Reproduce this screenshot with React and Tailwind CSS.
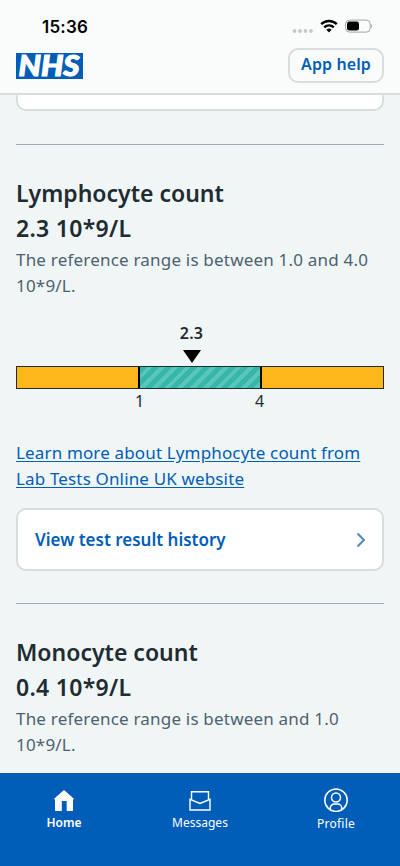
import React from 'react';

const results = [
  {
    name: 'Lymphocyte count',
    value: '2.3 10*9/L',
    range: ['The reference range is between 1.0 and 4.0', '10*9/L.'],
    chart: { value: '2.3', low: '1', high: '4' },
    link: ['Learn more about Lymphocyte count from', 'Lab Tests Online UK website'],
  },
  {
    name: 'Monocyte count',
    value: '0.4 10*9/L',
    range: ['The reference range is between and 1.0', '10*9/L.'],
  },
];

const StatusBar = () => (
  <div className="flex h-[45px] items-start justify-between pl-[42px] pr-[27px]">
    <span className="mt-[16px] font-['Inter',sans-serif] text-[17px] leading-[22px] font-semibold tracking-[0.2px] text-black">15:36</span>
    <div className="mt-[19px] flex items-center">
      <svg width="22" height="14" viewBox="0 0 22 14" fill="#c6c8c9" className="mr-[6px]">
        <circle cx="2.5" cy="12" r="1.9" />
        <circle cx="8" cy="12" r="1.9" />
        <circle cx="13.5" cy="12" r="1.9" />
        <circle cx="19" cy="12" r="1.9" />
      </svg>
      <svg width="18" height="14" viewBox="0 0 18 14" className="mr-[7px]">
        <g fill="none" stroke="#000" strokeWidth="2.4">
          <path d="M1.2 5.2a11 11 0 0 1 15.6 0" />
          <path d="M4.2 8.4a6.8 6.8 0 0 1 9.6 0" />
        </g>
        <path d="M9 13.4 6.4 10.8a3.7 3.7 0 0 1 5.2 0z" />
      </svg>
      <svg width="28" height="14" viewBox="0 0 28 14">
        <rect x=".6" y="1.1" width="24.6" height="12" rx="3.8" fill="none" stroke="#a3a5a5" />
        <rect x="2" y="2.6" width="12" height="9" rx="2.4" />
        <path d="M26.2 5v4.2c1.3-.6 1.3-3.6 0-4.2z" fill="#a3a5a5" />
      </svg>
    </div>
  </div>
);

const Header = () => (
  <header className="h-[95px] shrink-0 border-b-2 border-[#d8dddd] bg-[#fafcfb]">
    <StatusBar />
    <div className="flex items-start justify-between px-4">
      <svg width="67" height="26" viewBox="0 0 67 26" className="mt-[8px] overflow-visible">
        <rect width="67" height="26" fill="#005eb8" />
        <text x="2.5" y="23" textLength="61" lengthAdjust="spacingAndGlyphs" fill="#fff" stroke="#fff" strokeWidth="1.1" fontFamily="Lato, sans-serif" fontSize="27.5" fontStyle="italic" fontWeight="900">NHS</text>
      </svg>
      <button className="mt-[3px] h-[35px] w-[96px] rounded-[10px] border-2 border-[#d8dddd] pb-[3px] text-[16px] leading-[26px] font-semibold tracking-[0.1px] text-[#005eb8]">
        App help
      </button>
    </div>
  </header>
);

const RangeChart = ({ value, low, high }) => (
  <div className="mt-[22px] text-[#212b32]">
    <p className="w-[351px] text-center text-[16px] leading-[24px] font-semibold tracking-[0.3px]">{value}</p>
    <svg width="18" height="13" viewBox="0 0 18 13" className="ml-[167px] mt-[5px] block">
      <path d="M0 0h18L9 13z" />
    </svg>
    <div className="mt-[3px] flex h-[23px] border border-[#212b32] bg-[#ffb81c]">
      <div className="w-[121px]" />
      <div className="w-[124px] border-x-2 border-black bg-[repeating-linear-gradient(135deg,#35b7aa_0px,#35b7aa_5px,#5bc5bb_5px,#5bc5bb_9px)]" />
    </div>
    <div className="flex pl-[119px] text-[16px] leading-[24px]">
      <span className="w-[120px]">{low}</span>
      <span>{high}</span>
    </div>
  </div>
);

const TestResult = ({ name, value, range, chart, link }) => (
  <section className="border-t-[1.5px] border-[#a0a9b5] pt-[31px]">
    <h2 className="text-[23px] leading-[35px] font-semibold text-[#212b32]">{name}</h2>
    <p className="text-[23px] leading-[35px] font-semibold tracking-[0.3px] text-[#212b32]">{value}</p>
    <p className="mt-px text-[17px] leading-[26px] tracking-[0.2px] whitespace-nowrap text-[#4c6272]">
      {range[0]}<br />{range[1]}
    </p>
    {chart && <RangeChart {...chart} />}
    {link && (
      <a href="#" className="mt-[27px] block text-[17px] leading-[26px] tracking-[0.15px] whitespace-nowrap text-[#005eb8] underline underline-offset-2">
        {link[0]}<br />{link[1]}
      </a>
    )}
    {link && (
      <button className="mt-[16px] mb-[32px] flex h-[63px] w-full items-center justify-between rounded-[10px] border-2 border-[#d8dddd] bg-white pr-[16px] pl-[17px] text-[17px] font-semibold text-[#005eb8]">
        View test result history
        <svg width="10" height="16" viewBox="0 0 10 16" fill="none" stroke="#5088bd" strokeWidth="2">
          <path d="m1.5 1.5 6.5 6.5-6.5 6.5" />
        </svg>
      </button>
    )}
  </section>
);

const TabBar = () => (
  <nav className="grid h-[93px] shrink-0 grid-cols-[128px_144px_128px] bg-[#005eb8] text-center text-[12px] leading-[18px] text-white">
    <div className="flex flex-col items-center pt-[17px] font-semibold">
      <svg width="22" height="21" viewBox="0 0 22 21" fill="#fff">
        <path d="M11 0 .5 9.3H2V21h6.800V11h4.900v10H20V9.300h1.500z" />
      </svg>
      <span className="mt-[3px]">Home</span>
    </div>
    <div className="flex flex-col items-center pt-[17px]">
      <svg width="22" height="21" viewBox="0 0 22 21" fill="none" stroke="#fff" strokeWidth="1.4">
        <path d="M2.5 9.5V1.7h17v7.8" />
        <path d="M1 9.3V20h20V9.3l-10 4.2z" />
      </svg>
      <span className="mt-[3px]">Messages</span>
    </div>
    <div className="flex flex-col items-center pt-[15px]">
      <svg width="24" height="24" viewBox="0 0 24 24" fill="none" stroke="#fff" strokeWidth="1.5">
        <circle cx="12" cy="12.2" r="11.2" />
        <circle cx="12" cy="9.5" r="4.5" />
        <path d="M6.3 21.2V20a4 4 0 0 1 4-4h3.400a4 4 0 0 1 4 4v1.200" />
      </svg>
      <span className="mt-[3px] tracking-[0.25px]">Profile</span>
    </div>
  </nav>
);

const App = () => (
  <div className="flex h-[866px] w-[400px] flex-col overflow-hidden bg-[#f0f5f5] font-['Noto_Sans',sans-serif]">
    <Header />
    <main className="min-h-0 flex-1 overflow-hidden px-4">
      <div className="mb-[33px] h-[16px] rounded-b-[10px] border-2 border-t-0 border-[#d8dddd] bg-white" />
      {results.map((result) => (
        <TestResult key={result.name} {...result} />
      ))}
    </main>
    <TabBar />
  </div>
);

export default App;
